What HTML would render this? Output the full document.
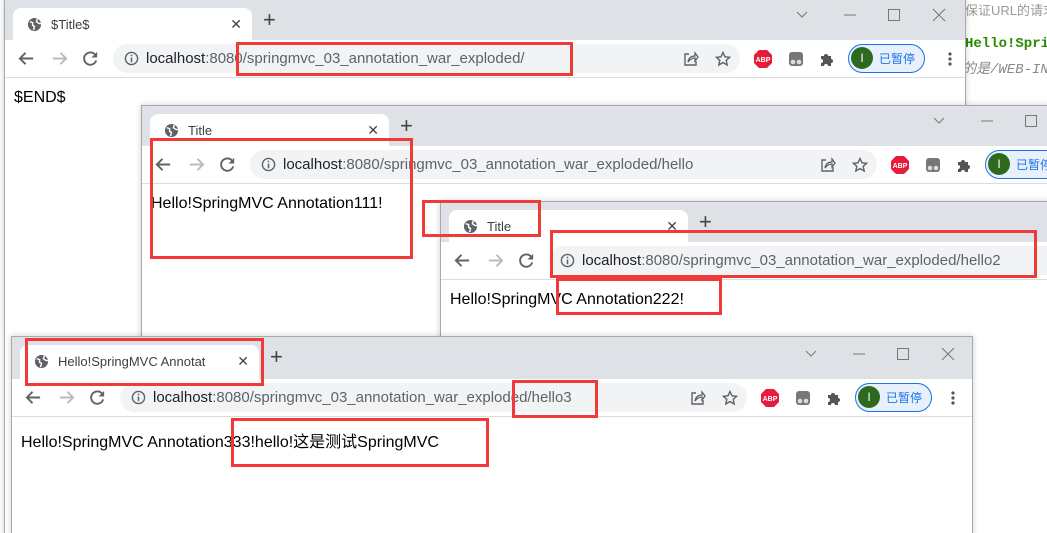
<!DOCTYPE html>
<html><head><meta charset="utf-8"><style>
*{margin:0;padding:0;box-sizing:border-box}
html,body{width:1047px;height:533px;overflow:hidden}
body{background:#fff;position:relative;font-family:"Liberation Sans","Noto Sans CJK SC",sans-serif}
.win{position:absolute;background:#fff;border:1px solid #a9a9a9;overflow:hidden;box-shadow:0 0 6px rgba(0,0,0,.2)}
.strip{position:absolute;left:0;right:0;top:0;height:40px;background:#dee1e6}
.tab{position:absolute;left:8px;top:8px;width:239px;height:34px;background:#fff;border-radius:8px 8px 0 0}
.tab .g{position:absolute;left:14px;top:9px}
.tab .t{position:absolute;left:38px;top:9px;font-size:13px;color:#3c4043;white-space:nowrap;width:148px;overflow:hidden}
.tab .x{position:absolute;right:10px;top:8px;font-size:14px;color:#444}
.plus{position:absolute;left:258px;top:10px;font-size:22px;color:#444;line-height:20px}
.tb{position:absolute;left:0;right:0;top:40px;height:38px;background:#fff;border-bottom:1px solid #dadce0}
.omni{position:absolute;left:108px;right:225px;top:4px;height:29px;border-radius:15px;background:#f1f3f4}
.url{position:absolute;left:33px;top:6px;font-size:15px;color:#5f6368;white-space:nowrap}
.url b{font-weight:normal;color:#202124}
.ic{position:absolute}
.pill{position:absolute;right:40px;top:4px;width:77px;height:29px;border:1.5px solid #1a73e8;border-radius:15px;background:#e8f0fe}
.pill .av{position:absolute;left:2px;top:2px;width:22px;height:22px;border-radius:50%;background:#2d6a1f;color:#fff;font-size:12px;text-align:center;line-height:22px}
.pill .tx{position:absolute;left:30px;top:5px;font-size:12px;color:#1a73e8}
.content{position:absolute;top:89px;left:9px;font-size:16px;color:#000;white-space:nowrap}
.ctl{position:absolute;top:4px}
.red{position:absolute;border:3px solid #f03a3a}
</style></head><body>

<div style="position:absolute;left:965px;top:0;font-size:13px;color:#999;white-space:nowrap">保证URL的请求</div>
<div style="position:absolute;left:965px;top:36px;font:bold 14px 'Liberation Mono',monospace;color:#2a8a00;white-space:nowrap">Hello!Sprin</div>
<div style="position:absolute;left:962px;top:58px;font:italic 14px 'Liberation Mono','Noto Sans CJK SC',monospace;color:#888;white-space:nowrap">的是/WEB-INF</div>

<svg width="0" height="0" style="position:absolute">
<defs>
<symbol id="globe" viewBox="0 0 16 16"><circle cx="8" cy="8" r="7" fill="#5f6368"/><path d="M3 5l3 1 0 3 2 1-1 4M11 2l-1 3 3 2 2 0" stroke="#fff" stroke-width="1.5" fill="none"/></symbol>
<symbol id="back" viewBox="0 0 20 20"><path d="M17 10H4M9 4l-6 6 6 6" stroke="currentColor" stroke-width="2" fill="none"/></symbol>
<symbol id="fwd" viewBox="0 0 20 20"><path d="M3 10h13M11 4l6 6-6 6" stroke="currentColor" stroke-width="2" fill="none"/></symbol>
<symbol id="rel" viewBox="0 0 20 20"><path d="M15.5 7A6.5 6.5 0 1 0 16 12" stroke="currentColor" stroke-width="2" fill="none"/><path d="M17 3v6h-6z" fill="currentColor"/></symbol>
<symbol id="info" viewBox="0 0 16 16"><circle cx="8" cy="8" r="6.5" stroke="#5f6368" stroke-width="1.5" fill="none"/><rect x="7.2" y="7" width="1.6" height="5" fill="#5f6368"/><rect x="7.2" y="4" width="1.6" height="1.6" fill="#5f6368"/></symbol>
<symbol id="share" viewBox="0 0 16 16"><path d="M6 3H2v11h11v-4" stroke="#5f6368" stroke-width="1.4" fill="none"/><path d="M5 11q1-6 7-6V2l3 4-3 4V7q-4 0-7 4z" stroke="#5f6368" stroke-width="1.3" fill="none"/></symbol>
<symbol id="star" viewBox="0 0 16 16"><path d="M8 1.5l2 4.3 4.6.5-3.4 3.1 1 4.6L8 11.6 3.8 14l1-4.6L1.4 6.3 6 5.8z" stroke="#5f6368" stroke-width="1.4" fill="none"/></symbol>
<symbol id="abp" viewBox="0 0 20 20"><path d="M6 1h8l5 5v8l-5 5H6l-5-5V6z" fill="#e61c3a"/><text x="10" y="13" font-size="7" font-weight="bold" fill="#fff" text-anchor="middle" font-family="Liberation Sans">ABP</text></symbol>
<symbol id="tab2" viewBox="0 0 16 16"><rect x="1" y="1" width="14" height="14" rx="3" fill="#777"/><circle cx="5" cy="11" r="2.3" fill="#ddd"/><circle cx="11" cy="11" r="2.3" fill="#ddd"/></symbol>
<symbol id="puz" viewBox="0 0 16 16"><path d="M2 5h3a2 2 0 1 1 4 0h3v3a2 2 0 1 1 0 4v3H9a2 2 0 1 0-4 0H2v-3a2 2 0 1 0 0-4z" fill="#555"/></symbol>
<symbol id="dots" viewBox="0 0 4 16"><circle cx="2" cy="3" r="1.6" fill="#555"/><circle cx="2" cy="8" r="1.6" fill="#555"/><circle cx="2" cy="13" r="1.6" fill="#555"/></symbol>
<symbol id="chev" viewBox="0 0 14 14"><path d="M2 4l5 5 5-5" stroke="#777" stroke-width="1" fill="none"/></symbol>
<symbol id="min" viewBox="0 0 14 14"><path d="M1 7h12" stroke="#777" stroke-width="1"/></symbol>
<symbol id="max" viewBox="0 0 14 14"><rect x="1.5" y="1.5" width="11" height="11" stroke="#777" stroke-width="1" fill="none"/></symbol>
<symbol id="cls" viewBox="0 0 14 14"><path d="M1 1l12 12M13 1L1 13" stroke="#777" stroke-width="1"/></symbol>
</defs></svg>

<div class="win" style="left:4px;top:-1px;width:962px;height:540px">
 <div class="strip"></div>
 <div class="tab"><svg class="g" width="15" height="15"><use href="#globe"/></svg><span class="t">$Title$</span><span class="x">✕</span></div>
 <div class="plus">+</div>
 <svg class="ctl" style="right:156px;top:8px" width="14" height="14"><use href="#chev"/></svg>
 <svg class="ctl" style="right:108px;top:8px" width="14" height="14"><use href="#min"/></svg>
 <svg class="ctl" style="right:64px;top:8px" width="14" height="14"><use href="#max"/></svg>
 <svg class="ctl" style="right:19px;top:8px" width="14" height="14"><use href="#cls"/></svg>
 <div class="tb">
  <svg class="ic" style="left:12px;top:9px;color:#5f6368" width="19" height="19"><use href="#back"/></svg>
  <svg class="ic" style="left:45px;top:9px;color:#bbb" width="19" height="19"><use href="#fwd"/></svg>
  <svg class="ic" style="left:76px;top:9px;color:#5f6368" width="19" height="19"><use href="#rel"/></svg>
  <div class="omni"><svg class="ic" style="left:11px;top:7px" width="15" height="15"><use href="#info"/></svg><span class="url"><b>localhost</b>:8080/springmvc_03_annotation_war_exploded/</span></div>
  <svg class="ic" style="right:266px;top:11px" width="16" height="16"><use href="#share"/></svg>
  <svg class="ic" style="right:234px;top:11px" width="16" height="16"><use href="#star"/></svg>
  <svg class="ic" style="right:192px;top:9px" width="20" height="20"><use href="#abp"/></svg>
  <svg class="ic" style="right:161px;top:11px" width="16" height="16"><use href="#tab2"/></svg>
  <svg class="ic" style="right:130px;top:11px" width="16" height="16"><use href="#puz"/></svg>
  <div class="pill"><div class="av">I</div><span class="tx">已暂停</span></div>
  <svg class="ic" style="right:13px;top:11px" width="4" height="16"><use href="#dots"/></svg>
 </div>
 <div class="content">$END$</div>
</div>

<div class="win" style="left:141px;top:105px;width:962px;height:440px">
 <div class="strip"></div>
 <div class="tab"><svg class="g" width="15" height="15"><use href="#globe"/></svg><span class="t">Title</span><span class="x">✕</span></div>
 <div class="plus">+</div>
 <svg class="ctl" style="right:156px;top:8px" width="14" height="14"><use href="#chev"/></svg>
 <svg class="ctl" style="right:108px;top:8px" width="14" height="14"><use href="#min"/></svg>
 <svg class="ctl" style="right:64px;top:8px" width="14" height="14"><use href="#max"/></svg>
 <div class="tb">
  <svg class="ic" style="left:12px;top:9px;color:#5f6368" width="19" height="19"><use href="#back"/></svg>
  <svg class="ic" style="left:45px;top:9px;color:#bbb" width="19" height="19"><use href="#fwd"/></svg>
  <svg class="ic" style="left:76px;top:9px;color:#5f6368" width="19" height="19"><use href="#rel"/></svg>
  <div class="omni"><svg class="ic" style="left:11px;top:7px" width="15" height="15"><use href="#info"/></svg><span class="url"><b>localhost</b>:8080/springmvc_03_annotation_war_exploded/hello</span></div>
  <svg class="ic" style="right:266px;top:11px" width="16" height="16"><use href="#share"/></svg>
  <svg class="ic" style="right:234px;top:11px" width="16" height="16"><use href="#star"/></svg>
  <svg class="ic" style="right:192px;top:9px" width="20" height="20"><use href="#abp"/></svg>
  <svg class="ic" style="right:161px;top:11px" width="16" height="16"><use href="#tab2"/></svg>
  <svg class="ic" style="right:130px;top:11px" width="16" height="16"><use href="#puz"/></svg>
  <div class="pill"><div class="av">I</div><span class="tx">已暂停</span></div>
 </div>
 <div class="content">Hello!SpringMVC Annotation111!</div>
</div>

<div class="win" style="left:440px;top:201px;width:962px;height:340px">
 <div class="strip"></div>
 <div class="tab"><svg class="g" width="15" height="15"><use href="#globe"/></svg><span class="t">Title</span><span class="x">✕</span></div>
 <div class="plus">+</div>
 <div class="tb">
  <svg class="ic" style="left:12px;top:9px;color:#5f6368" width="19" height="19"><use href="#back"/></svg>
  <svg class="ic" style="left:45px;top:9px;color:#bbb" width="19" height="19"><use href="#fwd"/></svg>
  <svg class="ic" style="left:76px;top:9px;color:#5f6368" width="19" height="19"><use href="#rel"/></svg>
  <div class="omni"><svg class="ic" style="left:11px;top:7px" width="15" height="15"><use href="#info"/></svg><span class="url"><b>localhost</b>:8080/springmvc_03_annotation_war_exploded/hello2</span></div>
 </div>
 <div class="content">Hello!SpringMVC Annotation222!</div>
</div>

<div class="win" style="left:11px;top:336px;width:962px;height:210px">
 <div class="strip" style="height:42px"></div>
 <div class="tab" style="top:8px"><svg class="g" width="15" height="15"><use href="#globe"/></svg><span class="t">Hello!SpringMVC Annotation333</span><span class="x">✕</span></div>
 <div class="plus">+</div>
 <svg class="ctl" style="right:154px;top:10px" width="14" height="14"><use href="#chev"/></svg>
 <svg class="ctl" style="right:106px;top:10px" width="14" height="14"><use href="#min"/></svg>
 <svg class="ctl" style="right:62px;top:10px" width="14" height="14"><use href="#max"/></svg>
 <svg class="ctl" style="right:17px;top:10px" width="14" height="14"><use href="#cls"/></svg>
 <div class="tb" style="top:42px">
  <svg class="ic" style="left:12px;top:9px;color:#5f6368" width="19" height="19"><use href="#back"/></svg>
  <svg class="ic" style="left:45px;top:9px;color:#bbb" width="19" height="19"><use href="#fwd"/></svg>
  <svg class="ic" style="left:76px;top:9px;color:#5f6368" width="19" height="19"><use href="#rel"/></svg>
  <div class="omni"><svg class="ic" style="left:11px;top:7px" width="15" height="15"><use href="#info"/></svg><span class="url"><b>localhost</b>:8080/springmvc_03_annotation_war_exploded/hello3</span></div>
  <svg class="ic" style="right:266px;top:11px" width="16" height="16"><use href="#share"/></svg>
  <svg class="ic" style="right:234px;top:11px" width="16" height="16"><use href="#star"/></svg>
  <svg class="ic" style="right:192px;top:9px" width="20" height="20"><use href="#abp"/></svg>
  <svg class="ic" style="right:161px;top:11px" width="16" height="16"><use href="#tab2"/></svg>
  <svg class="ic" style="right:130px;top:11px" width="16" height="16"><use href="#puz"/></svg>
  <div class="pill"><div class="av">I</div><span class="tx">已暂停</span></div>
  <svg class="ic" style="right:17px;top:11px" width="4" height="16"><use href="#dots"/></svg>
 </div>
 <div class="content" style="top:91px">Hello!SpringMVC Annotation333!hello!这是测试SpringMVC</div>
</div>

<div class="red" style="left:236px;top:42px;width:337px;height:34px"></div>
<div class="red" style="left:150px;top:138px;width:263px;height:121px"></div>
<div class="red" style="left:422px;top:200px;width:119px;height:37px"></div>
<div class="red" style="left:550px;top:230px;width:487px;height:48px"></div>
<div class="red" style="left:556px;top:278px;width:166px;height:37px"></div>
<div class="red" style="left:25px;top:338px;width:239px;height:48px"></div>
<div class="red" style="left:512px;top:380px;width:86px;height:38px"></div>
<div class="red" style="left:231px;top:418px;width:258px;height:49px"></div>
</body></html>
